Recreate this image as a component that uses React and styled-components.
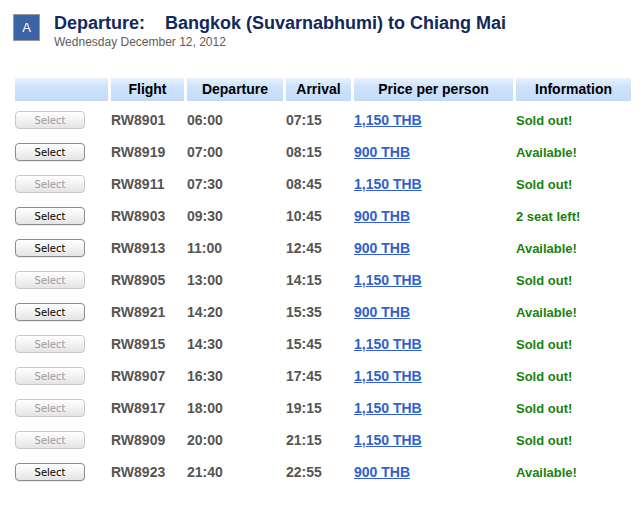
import React from "react";
import styled, { createGlobalStyle } from "styled-components";

const GlobalStyle = createGlobalStyle`
  body {
    margin: 0;
    background: #fff;
    font-family: "Liberation Sans", Arial, sans-serif;
  }
`;

const Page = styled.div`
  width: 644px;
  height: 507px;
  padding: 13px 0 0 13px;
  box-sizing: border-box;
`;

const TitleBar = styled.div`
  display: flex;
  align-items: flex-start;
  gap: 14px;
`;

const Badge = styled.div`
  width: 25px;
  height: 25px;
  margin-top: 1px;
  background: #3b63a6;
  border: 1px solid #9a9a9a;
  color: #fff;
  font-size: 13px;
  display: flex;
  align-items: center;
  justify-content: center;
`;

const TitleText = styled.div`
  display: flex;
  flex-direction: column;
`;

const Heading = styled.h1`
  margin: 0;
  font-size: 18px;
  font-weight: bold;
  color: #11295c;
  line-height: 21px;
`;

const Label = styled.span`
  display: inline-block;
  margin-right: 20px;
`;

const DateLine = styled.div`
  font-size: 12px;
  color: #5c5c5c;
  line-height: 14px;
  margin-top: 1px;
`;

const Grid = styled.div`
  display: grid;
  grid-template-columns: 93px 73px 96px 65px 159px 115px;
  column-gap: 3px;
  margin: 29px 0 0 2px;
`;

const HeadCell = styled.div`
  height: 23px;
  line-height: 23px;
  text-align: center;
  font-size: 14px;
  font-weight: bold;
  color: #000;
  background: linear-gradient(#e9f3fe 0%, #cfe3fb 35%, #c4dbf8 100%);
  margin-bottom: 3px;
`;

const Cell = styled.div`
  height: 32px;
  display: flex;
  align-items: center;
  font-size: 14px;
  font-weight: bold;
  color: #555;
`;

const SelectButton = styled.button`
  width: 70px;
  height: 18px;
  padding: 0;
  border-radius: 4px;
  border: 1px solid ${(p) => (p.disabled ? "#c8c8c8" : "#8a8a8a")};
  background: linear-gradient(#ffffff, #f2f2f2 50%, #e4e4e4);
  font-family: "DejaVu Sans", sans-serif;
  font-size: 10px;
  color: ${(p) => (p.disabled ? "#9a9a9a" : "#000")};
  box-shadow: ${(p) => (p.disabled ? "none" : "0 1px 0 rgba(0,0,0,0.08)")};
`;

const PriceLink = styled.a`
  color: #2f5fd0;
  text-decoration: underline;
  font-weight: bold;
  cursor: pointer;
`;

const Status = styled.span`
  font-size: 13px;
  color: #1d7f0c;
`;

const flights = [
  ["RW8901", "06:00", "07:15", "1,150 THB", "Sold out!"],
  ["RW8919", "07:00", "08:15", "900 THB", "Available!"],
  ["RW8911", "07:30", "08:45", "1,150 THB", "Sold out!"],
  ["RW8903", "09:30", "10:45", "900 THB", "2 seat left!"],
  ["RW8913", "11:00", "12:45", "900 THB", "Available!"],
  ["RW8905", "13:00", "14:15", "1,150 THB", "Sold out!"],
  ["RW8921", "14:20", "15:35", "900 THB", "Available!"],
  ["RW8915", "14:30", "15:45", "1,150 THB", "Sold out!"],
  ["RW8907", "16:30", "17:45", "1,150 THB", "Sold out!"],
  ["RW8917", "18:00", "19:15", "1,150 THB", "Sold out!"],
  ["RW8909", "20:00", "21:15", "1,150 THB", "Sold out!"],
  ["RW8923", "21:40", "22:55", "900 THB", "Available!"],
];

const headers = ["", "Flight", "Departure", "Arrival", "Price per person", "Information"];

export default function App() {
  return (
    <Page>
      <GlobalStyle />
      <TitleBar>
        <Badge>A</Badge>
        <TitleText>
          <Heading>
            <Label>Departure:</Label>Bangkok (Suvarnabhumi) to Chiang Mai
          </Heading>
          <DateLine>Wednesday December 12, 2012</DateLine>
        </TitleText>
      </TitleBar>
      <Grid>
        {headers.map((h, i) => (
          <HeadCell key={i}>{h}</HeadCell>
        ))}
        {flights.map(([no, dep, arr, price, info]) => {
          const soldOut = info === "Sold out!";
          return (
            <React.Fragment key={no}>
              <Cell>
                <SelectButton disabled={soldOut}>Select</SelectButton>
              </Cell>
              <Cell>{no}</Cell>
              <Cell>{dep}</Cell>
              <Cell>{arr}</Cell>
              <Cell>
                <PriceLink>{price}</PriceLink>
              </Cell>
              <Cell>
                <Status>{info}</Status>
              </Cell>
            </React.Fragment>
          );
        })}
      </Grid>
    </Page>
  );
}
